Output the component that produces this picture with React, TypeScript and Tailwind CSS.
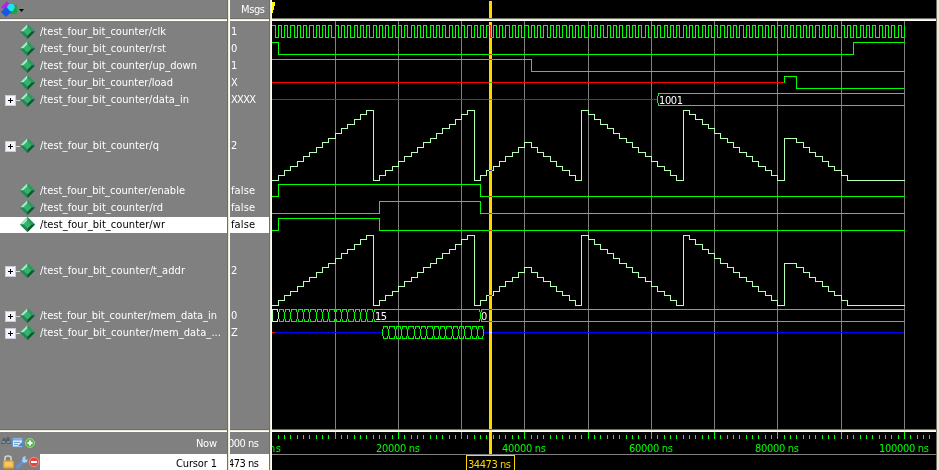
import React from 'react';

const FONT = '"DejaVu Sans Condensed", "DejaVu Sans", sans-serif';

const X = (t: number) => Math.floor(271.9 + 0.006325 * t);
const END = 100000;

type Pt = [number, number];

/** Builds a stepped path through [time, y] samples, ending at the end of the run. */
function steps(samples: Pt[], end = END): string {
  let d = '';
  samples.forEach(([t, y], i) => {
    d += i === 0 ? `M${X(t)} ${y + 0.5}` : `H${X(t) + 0.5}V${y + 0.5}`;
  });
  return d + `H${X(end) + 0.5}`;
}

const clock: Pt[] = [];
for (let t = 0; t < END; t += 1000) {
  clock.push([t, 25], [t + 500, 37]);
}
clock.push([END, 25]);

const counter: Pt[] = [];
for (let k = 0; k < 81; k++) {
  let v: number;
  if (k < 41) v = k < 32 ? k % 16 : k - 32;
  else if (k < 49) v = 48 - k;
  else v = 15 - ((k - 49) % 16);
  counter.push([k * 1000, v]);
}
counter.push([81000, 9]);
for (let k = 83; k <= 91; k++) counter.push([k * 1000, 91 - k]);

const analog = (base: number) =>
  steps(counter.map(([t, v]): Pt => [t, Math.floor(base - (v * 14) / 3)]));

/** One bus segment between two pixel columns. */
function bus(x0: number, x1: number, top: number, openLeft = false, openRight = false): string {
  const a = top + 0.5;
  const b = top + 12.5;
  const l = openLeft ? x0 : x0 + 1;
  const r = openRight ? x1 + 1 : x1;
  let d = `M${l} ${a}H${r}M${l} ${b}H${r}`;
  if (!openLeft) d += `M${x0 + 1.5} ${top}V${top + 3}M${x0 + 0.5} ${top + 3}V${top + 10}M${x0 + 1.5} ${top + 10}V${top + 13}`;
  if (!openRight) d += `M${x1 - 0.5} ${top}V${top + 3}M${x1 + 0.5} ${top + 3}V${top + 10}M${x1 - 0.5} ${top + 10}V${top + 13}`;
  return d;
}

let memIn = '';
for (let t = 1000; t < 16000; t += 1000) memIn += bus(X(t), X(t + 1000), 309);
memIn += bus(X(16000), X(33000), 309) + bus(X(33000), X(END), 309, false, true);
let memOut = '';
for (let t = 17500; t < 33500; t += 1000) memOut += bus(X(t), X(t + 1000), 326);

const grid = Array.from({ length: 10 }, (_, i) => X((i + 1) * 10000));
const ticks = Array.from({ length: 104 }, (_, i) => i + 1);

function Waves() {
  return (
    <svg className="block" width="664" height="408" viewBox="272 21 664 408" shapeRendering="crispEdges" fill="none">
      <rect x="272" y="21" width="664" height="408" fill="#000" />
      {grid.map((x) => (
        <rect key={x} x={x} y="21" width="1" height="408" fill="#808080" />
      ))}
      <g stroke="#f00">
        <path d={`M272 82.5H${X(81000)}`} />
        <path d={`M272 99.5H${X(61000)}`} />
        <path d="M272 332.5H275" />
      </g>
      <path stroke="#00f" d={`M275 332.5H${X(17500)}M${X(33500) + 1} 332.5H904`} />
      <g stroke="#0f0">
        <path d={steps(clock)} />
        <path d={steps([[0, 42], [1000, 54], [92000, 42]])} />
        <path d={steps([[0, 59], [41000, 71]])} />
        <path d={`M${X(81000) + 0.5} 83V76.5H${X(83000) + 0.5}V88.5H904`} />
        <path d={bus(X(61000), X(END), 93, false, true)} />
        <path d={steps([[0, 196], [1000, 184], [33000, 196]])} />
        <path d={steps([[0, 213], [17000, 201], [33000, 213]])} />
        <path d={steps([[0, 230], [1000, 218], [17000, 230]])} />
        <path d={memIn} />
        <path d={memOut} />
      </g>
      <g stroke="#b4ffb4">
        <path d={analog(180)} />
        <path d={analog(305)} />
        <path d={bus(272, 278, 309, true)} />
        <path d="M272.5 309V322" />
      </g>
      <rect className="mix-blend-difference" x="489" y="22" width="3" height="407" fill="#ffd700" />
      <g fill="#fff" fontSize="11" fontFamily={FONT}>
        <text x="659" y="104" textLength="24">1001</text>
        <text x="375" y="320" textLength="12">15</text>
        <text x="481" y="320">0</text>
      </g>
    </svg>
  );
}

function TimeAxis() {
  return (
    <svg className="block" width="664" height="38" viewBox="272 432 664 38" shapeRendering="crispEdges">
      <rect x="272" y="432" width="664" height="38" fill="#000" />
      {ticks.map((k) => (
        <rect key={k} x={X(k * 1000)} y={k % 10 ? 435 : 432} width="1" height={k % 10 ? 4 : 7} fill="#0f0" />
      ))}
      <g fill="#0f0" fontSize="11" fontFamily={FONT}>
        <text x="269" y="452" textLength="12">ns</text>
        {[20000, 40000, 60000, 80000].map((t) => (
          <text key={t} x={X(t) - 22} y="452" textLength="44">{t} ns</text>
        ))}
        <text x="879" y="452" textLength="50">100000 ns</text>
      </g>
      <rect x="272" y="454" width="664" height="1" fill="#808080" />
      <rect x="489" y="432" width="3" height="22" fill="#ffd700" />
      <path d="M466.5 471V455.5H514.5V471" fill="none" stroke="#ffd700" />
      <text x="468" y="468" fill="#ffd700" fontSize="11" fontFamily={FONT} textLength="43">34473 ns</text>
    </svg>
  );
}

function Gem() {
  return (
    <svg className="shrink-0" width="15" height="15" viewBox="0 0 15 15">
      <path d="M7.5 0L15 7.5 7.5 15 0 7.5z" fill="#1f8a50" />
      <path d="M7.5 0L0 7.5H3.5L7.5 3.5z" fill="#a5e8c4" />
      <path d="M7.5 0L15 7.5H11.5L7.5 3.5z" fill="#2c9a60" />
      <path d="M0 7.5L7.5 15V11.5L3.5 7.5z" fill="#238752" />
      <path d="M15 7.5L7.5 15V11.5L11.5 7.5z" fill="#0c5730" />
      <path d="M7.5 3.5L11.5 7.5 7.5 11.5 3.5 7.5z" fill="#35b26e" />
    </svg>
  );
}

function Expander() {
  return (
    <svg className="mt-[2px] shrink-0" width="15" height="11" viewBox="0 0 15 11" shapeRendering="crispEdges">
      <rect x="0.5" y="0.5" width="10" height="10" fill="#f4f4fa" stroke="#c4cce0" />
      <path d="M3 5.5H8M5.5 3V8" stroke="#000" />
      <path d="M11 5.5H15" stroke="#d8d8d8" />
    </svg>
  );
}

interface Signal {
  name: string;
  value: string;
  width: number;
  expand?: boolean;
  tall?: boolean;
  selected?: boolean;
}

const signals: Signal[] = [
  { name: 'clk', value: '1', width: 126 },
  { name: 'rst', value: '0', width: 126 },
  { name: 'up_down', value: '1', width: 157 },
  { name: 'load', value: 'X', width: 133 },
  { name: 'data_in', value: 'XXXX', width: 149, expand: true },
  { name: 'q', value: '2', width: 119, expand: true, tall: true },
  { name: 'enable', value: 'false', width: 145 },
  { name: 'rd', value: 'false', width: 123 },
  { name: 'wr', value: 'false', width: 125, selected: true },
  { name: 't_addr', value: '2', width: 145, expand: true, tall: true },
  { name: 'mem_data_in', value: '0', width: 177, expand: true },
  { name: 'mem_data_...', value: 'Z', width: 181, expand: true },
];

function Label({ text, width, dark }: { text: string; width?: number; dark?: boolean }) {
  return (
    <svg className="block shrink-0 overflow-visible" width={width ?? 30} height="17">
      <text x="0" y="12" fontSize="11" fontFamily={FONT} fill={dark ? '#000' : '#fff'} textLength={width}>
        {text}
      </text>
    </svg>
  );
}

const rowHeight = (s: Signal) => (s.tall ? 'h-[74px]' : 'h-[17px]');

function HBar() {
  return (
    <div className="flex h-[3px] w-full shrink-0 flex-col">
      <div className="h-px bg-[#716f64]" />
      <div className="h-px bg-[#ece9d8]" />
      <div className="h-px bg-white" />
    </div>
  );
}

function VBar() {
  return (
    <div className="flex h-full shrink-0">
      <div className="w-px bg-[#716f64]" />
      <div className="w-px bg-[#ece9d8]" />
      <div className="w-px bg-white" />
    </div>
  );
}

function ToolIcons() {
  return (
    <svg className="block shrink-0" width="40" height="38" viewBox="0 0 40 38">
      <path d="M1 11l2-5h2l1 2 1-3h2l2 6v1H7l-1-2-1 2H1z" fill="#52606c" />
      <path d="M2 10h3M7 10h3" stroke="#a9bac6" />
      <rect x="12.5" y="6" width="10" height="9" rx="1" fill="#dceaf8" stroke="#5f95cf" />
      <path d="M13 7.5h9" stroke="#7fa9da" strokeWidth="2" />
      <path d="M14 10.5h6M14 12.5h4" stroke="#7b9fc0" />
      <path d="M18 14l4-4 1 4z" fill="#4687ca" />
      <circle cx="30" cy="11" r="4.5" fill="#55b648" stroke="#97d58d" />
      <path d="M27.5 11h5M30 8.5v5" stroke="#fff" strokeWidth="2" />
      <path d="M5 29v-3q0-2 3-2t3 2v3" stroke="#d7d5c9" strokeWidth="1.6" fill="none" />
      <rect x="3.5" y="29" width="10" height="7" rx="1" fill="#f1b73d" stroke="#dca02e" />
      <path d="M5 31h7M5 33h7" stroke="#ffdc7c" />
      <path d="M17.5 35l6-6" stroke="#5a94e2" strokeWidth="3" strokeLinecap="round" />
      <path d="M22 29l1-4 3-1-1 3 2 1 1-2-1 4-3 1z" fill="#acd0f7" />
      <circle cx="34" cy="30" r="4.7" fill="#e3473e" stroke="#f19087" />
      <path d="M31 30h6" stroke="#fff" strokeWidth="2" />
    </svg>
  );
}

export default function App() {
  return (
    <div className="flex h-[470px] w-[939px] overflow-hidden bg-[#808080]">
      <section className="flex w-[227px] shrink-0 flex-col overflow-hidden">
        <div className="h-[18px]">
          <svg width="30" height="18" viewBox="0 0 30 18">
            <path d="M7 1l4 5-8 3-2-2z" fill="#b426e0" />
            <path d="M8 5h9v9H8z" fill="#22a044" />
            <path d="M9 4h4l2 3-2 4H9L7 7z" fill="#19e4f4" />
            <path d="M6 7l5 5-5 5-5-5z" fill="#1557e8" />
            <path d="M19 9h5l-2.5 3z" fill="#000" />
          </svg>
        </div>
        <HBar />
        <div className="flex h-[408px] flex-col pt-[2px]">
          {signals.map((s) => (
            <div key={s.name} className={`flex shrink-0 items-center ${rowHeight(s)}`}>
              <div className={`flex w-full items-center ${s.selected ? 'h-[16px] bg-white' : 'h-[16px]'}`}>
                <div className="flex w-5 shrink-0 items-center pl-[5px]">{s.expand && <Expander />}</div>
                <Gem />
                <div className="ml-[5px]">
                  <Label text={`/test_four_bit_counter/${s.name}`} width={s.width} dark={s.selected} />
                </div>
              </div>
            </div>
          ))}
        </div>
        <HBar />
        <div className="flex h-[38px]">
          <ToolIcons />
          <div className="flex grow flex-col items-end">
            <div className="flex h-[22px] w-full justify-end pt-[3px] pr-[10px]"><Label text="Now" width={21} /></div>
            <div className="flex h-4 w-full justify-end bg-white pt-px pr-[10px]"><Label text="Cursor 1" width={41} dark /></div>
          </div>
        </div>
      </section>
      <VBar />
      <section className="flex w-[39px] shrink-0 flex-col overflow-hidden">
        <div className="h-[18px] pt-px pl-[11px]"><Label text="Msgs" width={24} /></div>
        <HBar />
        <div className="flex h-[408px] flex-col pt-[2px]">
          {signals.map((s) => (
            <div key={s.name} className={`flex shrink-0 items-center ${rowHeight(s)}`}>
              <div className={`flex w-full items-center pl-px ${s.selected ? 'h-[16px] bg-white' : 'h-[16px]'}`}>
                <Label
                  text={s.value}
                  width={s.value === 'false' ? 24 : s.value === 'XXXX' ? 25 : undefined}
                  dark={s.selected}
                />
              </div>
            </div>
          ))}
        </div>
        <HBar />
        <div className="flex h-[22px] justify-end pt-[3px] pr-[10px]"><Label text="000 ns" width={31} /></div>
        <div className="flex h-4 justify-end bg-white pt-px pr-[10px]"><Label text="473 ns" width={31} dark /></div>
      </section>
      <VBar />
      <section className="flex w-[664px] shrink-0 flex-col">
        <svg className="block" width="664" height="18" shapeRendering="crispEdges">
          <rect width="664" height="18" fill="#000" />
          <path d="M0 2h3v4h-1v4h-1v3h-1z" fill="#ff0" />
          <rect x="217" y="1" width="3" height="17" fill="#ffd700" />
        </svg>
        <HBar />
        <Waves />
        <HBar />
        <TimeAxis />
      </section>
      <div className="w-px bg-[#716f64]" />
      <div className="w-0.5 bg-[#ece9d8]" />
    </div>
  );
}
